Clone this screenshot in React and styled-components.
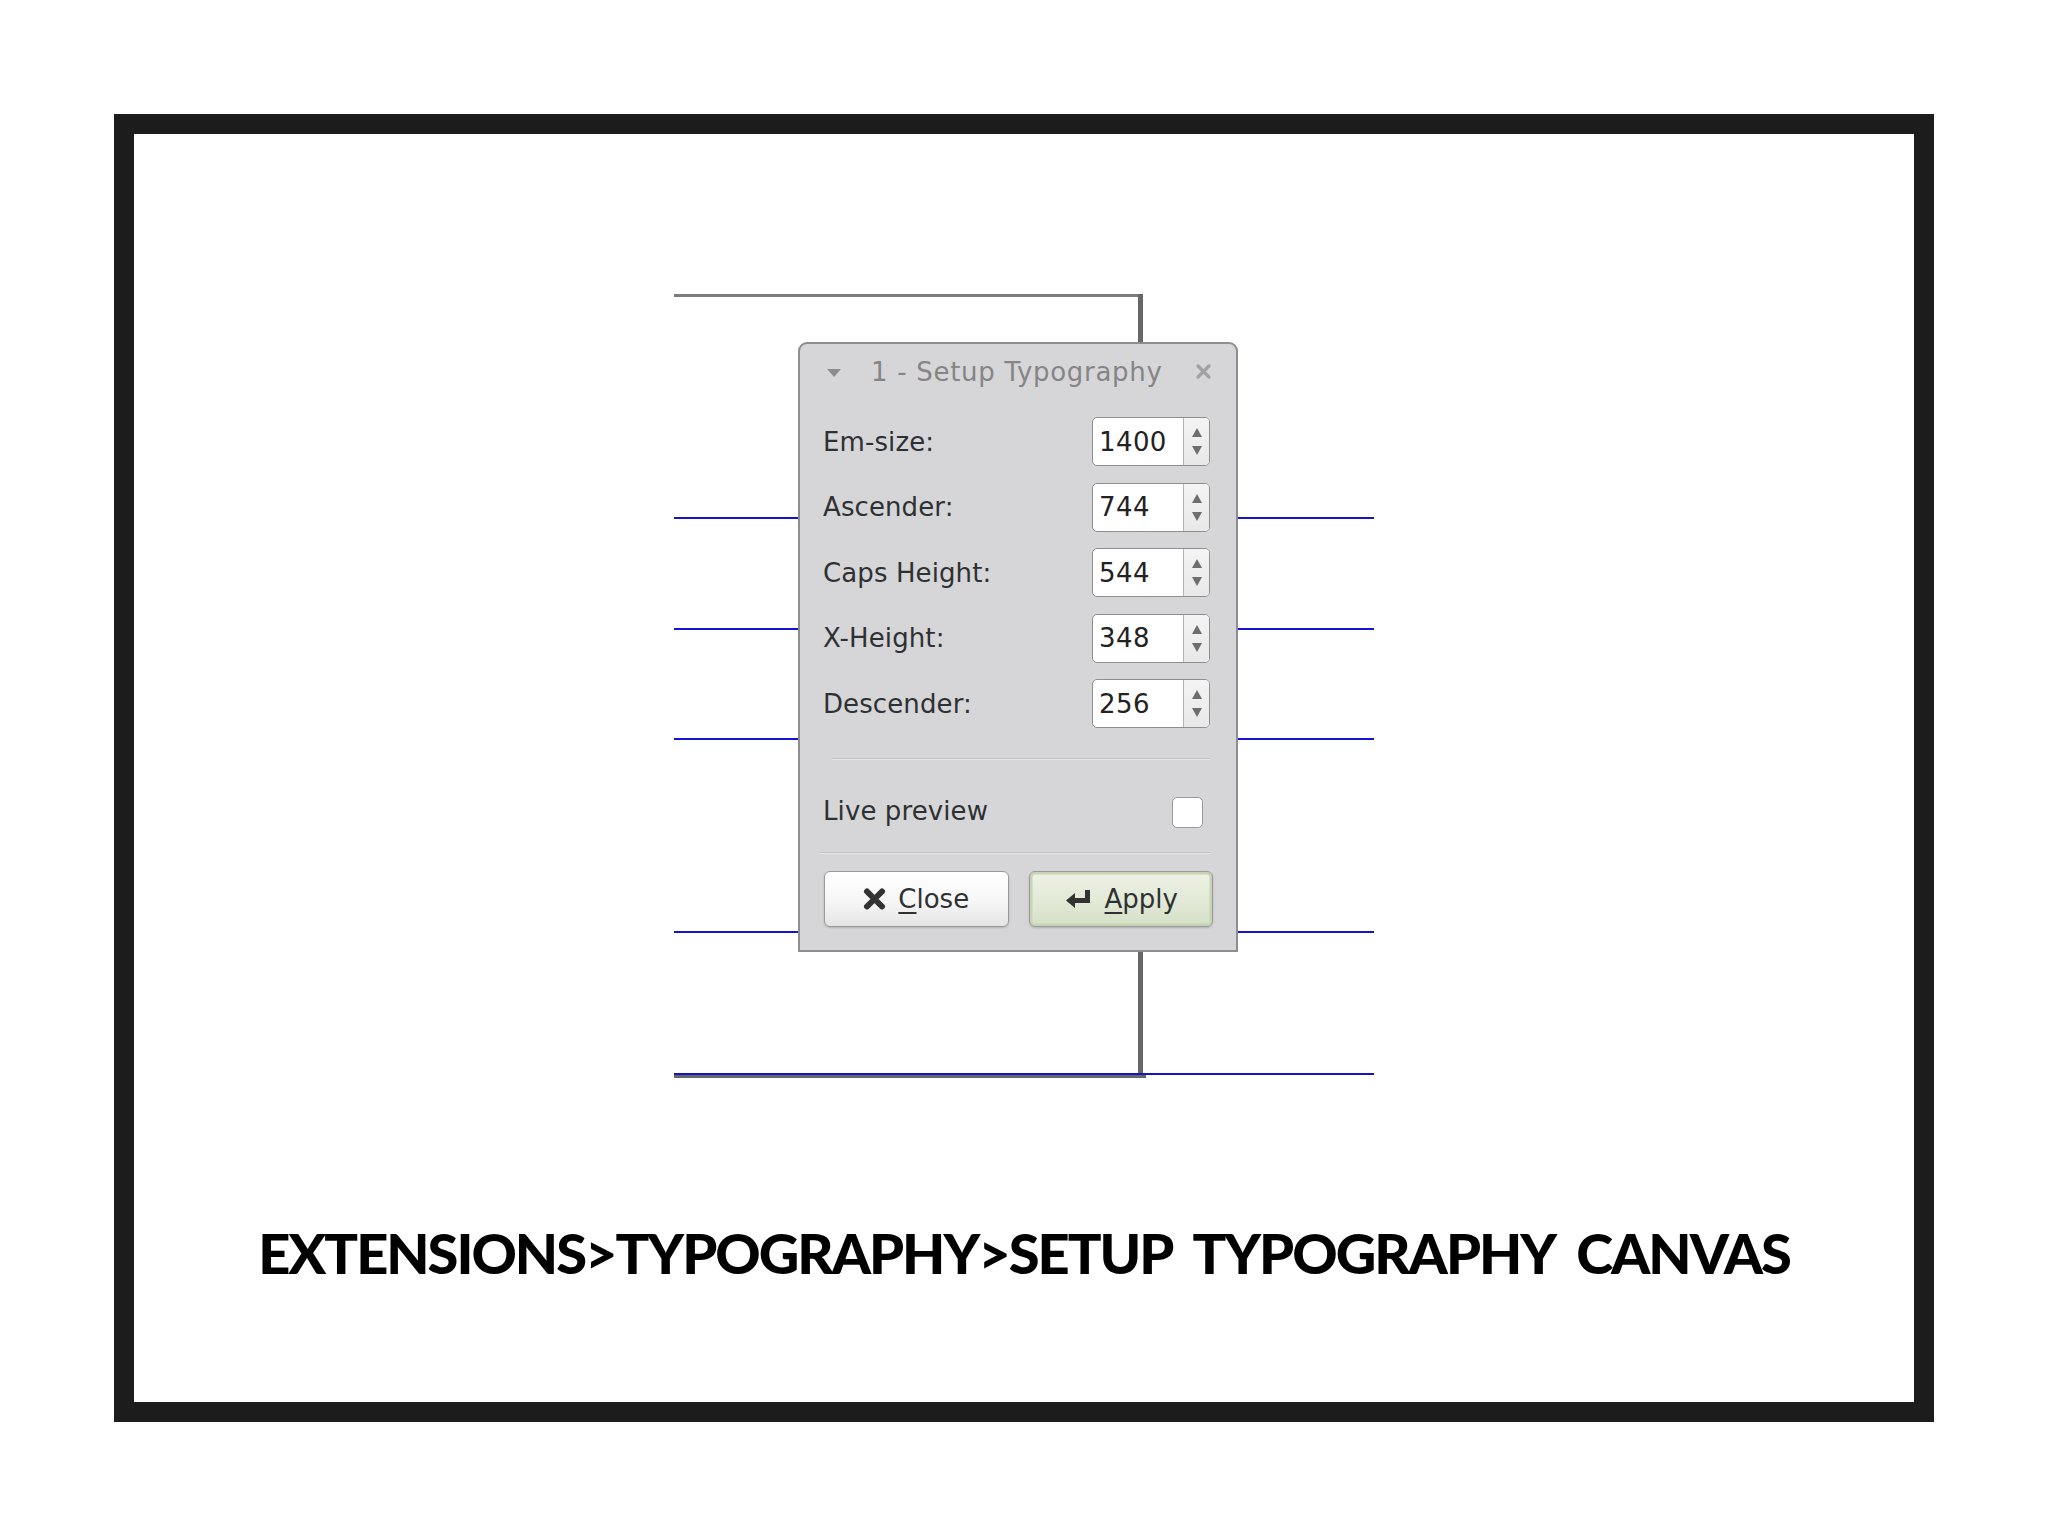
import React from 'react';
import styled, { createGlobalStyle } from 'styled-components';

const GlobalStyle = createGlobalStyle`
  html, body {
    margin: 0;
    padding: 0;
    background: #ffffff;
  }
  * { box-sizing: border-box; }
`;

const Page = styled.div`
  width: 2048px;
  height: 1536px;
  padding: 114px 0 0 114px;
  background: #ffffff;
`;

const Frame = styled.div`
  width: 1820px;
  height: 1308px;
  border: 20px solid #1c1c1c;
  display: flex;
  flex-direction: column;
  align-items: center;
`;

const Canvas = styled.div`
  position: relative;
  width: 700px;
  height: 784px;
  margin-top: 160px;
  flex-shrink: 0;
`;

const Guide = styled.div`
  position: absolute;
  left: ${p => p.$left || 0}px;
  top: ${p => p.$top}px;
  width: ${p => p.$width}px;
  height: ${p => p.$height || 2}px;
  background: ${p => p.$color || '#1414cc'};
`;

const Dialog = styled.div`
  position: absolute;
  left: 124px;
  top: 48px;
  width: 440px;
  height: 610px;
  background: #d6d6d8;
  border: 2px solid #8e8e8e;
  border-radius: 9px 9px 0 0;
  padding: 0 26px 0 23px;
  display: flex;
  flex-direction: column;
  font-family: "DejaVu Sans", "Liberation Sans", sans-serif;
  font-size: 26px;
  color: #2e3134;
`;

const TitleBar = styled.div`
  height: 55px;
  display: flex;
  align-items: center;
  margin-left: 4px;
  margin-right: -2px;
`;

const Expander = styled.div`
  width: 0;
  height: 0;
  border-left: 7px solid transparent;
  border-right: 7px solid transparent;
  border-top: 8px solid #8c8c8c;
  margin-right: 30px;
  margin-top: 2px;
`;

const Title = styled.div`
  white-space: nowrap;
  color: #858585;
  letter-spacing: 0.7px;
`;

const TitleClose = styled.svg`
  margin-left: auto;
  width: 17px;
  height: 17px;
`;

const Fields = styled.div`
  margin-top: 18px;
  display: grid;
  grid-auto-rows: 49px;
  row-gap: 16.5px;
`;

const Row = styled.div`
  display: flex;
  align-items: center;
  justify-content: space-between;
`;

const Label = styled.span`
  white-space: nowrap;
  letter-spacing: 0.1px;
`;

const Spin = styled.div`
  width: 118px;
  height: 49px;
  display: flex;
  background: #ffffff;
  border: 1.5px solid #8f8f8f;
  border-radius: 5px;
  overflow: hidden;
`;

const SpinValue = styled.div`
  flex: 1;
  display: flex;
  align-items: center;
  padding-left: 6px;
  color: #222222;
  letter-spacing: 0.4px;
`;

const SpinButtons = styled.div`
  width: 26px;
  border-left: 1.5px solid #b4b4b4;
  background: linear-gradient(#f4f4f4, #e8e8e8);
  display: flex;
  flex-direction: column;
  align-items: center;
  justify-content: center;
  gap: 9px;
`;

const Arrow = styled.div`
  width: 0;
  height: 0;
  border-left: 5.5px solid transparent;
  border-right: 5.5px solid transparent;
  ${p => (p.$down ? 'border-top: 9px solid #6e6e6e;' : 'border-bottom: 9px solid #6e6e6e;')}
`;

const Separator = styled.div`
  height: 2px;
  margin: ${p => p.$margin};
  border-top: 1px solid #c2c2c4;
  border-bottom: 1px solid #e6e6e8;
`;

const PreviewRow = styled.div`
  height: 82px;
  margin-top: 10px;
  display: flex;
  align-items: center;
  justify-content: space-between;
`;

const Check = styled.div`
  width: 31px;
  height: 31px;
  margin-right: 7px;
  margin-top: 2px;
  background: #ffffff;
  border: 1.5px solid #9a9a9a;
  border-radius: 5px;
`;

const Buttons = styled.div`
  margin: 17px -3px 0 1px;
  display: grid;
  grid-template-columns: 1fr 1fr;
  column-gap: 20px;
`;

const Button = styled.div`
  height: 56px;
  display: flex;
  align-items: center;
  justify-content: center;
  gap: 12px;
  border: 1.5px solid #9a9a9a;
  border-radius: 6px;
  color: #2e3134;
  box-shadow: 0 1px 2px rgba(0, 0, 0, 0.18);
  background: ${p =>
    p.$primary
      ? 'linear-gradient(#eef2e6, #e2e9d6 55%, #d6dfc6)'
      : 'linear-gradient(#ffffff, #f6f6f6 55%, #e4e4e4)'};
  ${p => p.$primary && 'box-shadow: inset 0 0 0 2.5px #c7d3b2, 0 1px 2px rgba(0,0,0,0.18);'}

  u {
    text-decoration-thickness: 2px;
    text-underline-offset: 4px;
  }
`;

const Caption = styled.div`
  margin-top: 141px;
  font-family: "Lato", "Liberation Sans", sans-serif;
  font-weight: 900;
  font-size: 56px;
  line-height: 1.2;
  color: #000000;
  white-space: nowrap;
  letter-spacing: -2px;
  word-spacing: 12px;
`;

const fields = [
  ['Em-size:', '1400'],
  ['Ascender:', '744'],
  ['Caps Height:', '544'],
  ['X-Height:', '348'],
  ['Descender:', '256'],
];

const blueLines = [223, 334, 444, 637, 779];

const CloseIcon = () => (
  <svg width="23" height="22" viewBox="0 0 23 22">
    <path d="M4 3.5 L19 18.5 M19 3.5 L4 18.5" stroke="#333" strokeWidth="6" strokeLinecap="round" />
  </svg>
);

const ReturnIcon = () => (
  <svg width="29" height="22" viewBox="0 0 29 22">
    <path d="M21 2 h5 v13 H11 v5 L2 12.5 L11 5 v5 h10 Z" fill="#333" />
  </svg>
);

export default function App() {
  return (
    <Page>
      <GlobalStyle />
      <Frame>
        <Canvas>
          <Guide $top={0} $width={469} $height={3} $color="#7c7c7c" />
          <Guide $left={464} $top={0} $width={5} $height={784} $color="#676767" />
          <Guide $top={781} $width={472} $height={3} $color="#666666" />
          {blueLines.map(t => (
            <Guide key={t} $top={t} $width={700} />
          ))}
          <Dialog>
            <TitleBar>
              <Expander />
              <Title>1 - Setup Typography</Title>
              <TitleClose viewBox="0 0 17 17">
                <path d="M3 3 L14 14 M14 3 L3 14" stroke="#a2a2a2" strokeWidth="3.2" strokeLinecap="round" />
              </TitleClose>
            </TitleBar>
            <Fields>
              {fields.map(([label, value]) => (
                <Row key={label}>
                  <Label>{label}</Label>
                  <Spin>
                    <SpinValue>{value}</SpinValue>
                    <SpinButtons>
                      <Arrow />
                      <Arrow $down />
                    </SpinButtons>
                  </Spin>
                </Row>
              ))}
            </Fields>
            <Separator $margin="30px 0 0 9px" />
            <PreviewRow>
              <Label>Live preview</Label>
              <Check />
            </PreviewRow>
            <Separator $margin="0 0 0 -3px" />
            <Buttons>
              <Button>
                <CloseIcon />
                <span><u>C</u>lose</span>
              </Button>
              <Button $primary>
                <ReturnIcon />
                <span><u>A</u>pply</span>
              </Button>
            </Buttons>
          </Dialog>
        </Canvas>
        <Caption>EXTENSIONS&gt;TYPOGRAPHY&gt;SETUP TYPOGRAPHY CANVAS</Caption>
      </Frame>
    </Page>
  );
}
